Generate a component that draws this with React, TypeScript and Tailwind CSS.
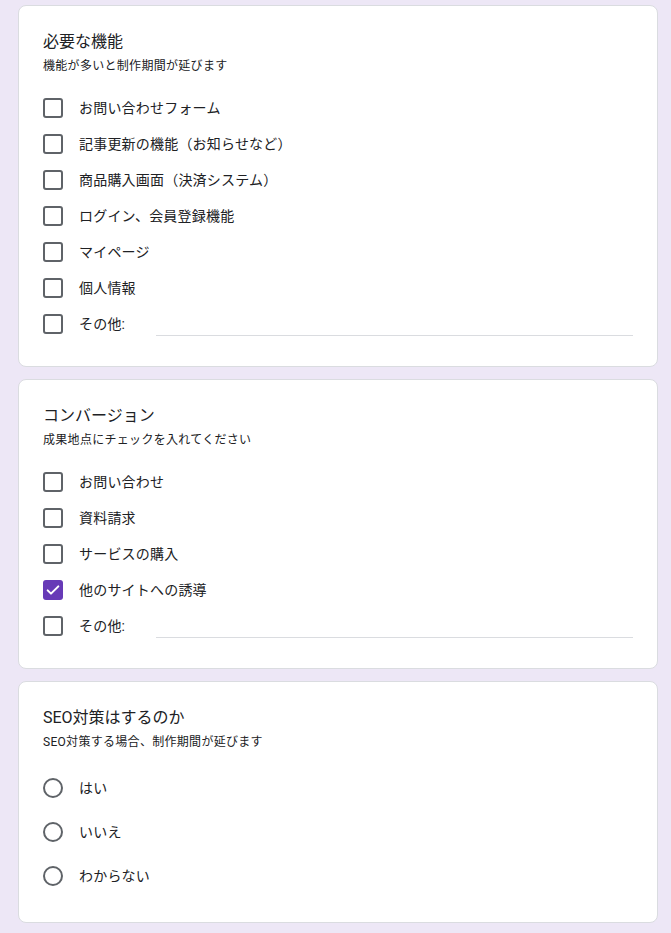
import React, { useState } from 'react';

const font = "font-['Roboto','Noto_Sans_CJK_JP',sans-serif]";

function Checkbox({ checked }: { checked: boolean }) {
  return checked ? (
    <span className="flex h-5 w-5 items-center justify-center rounded-[3px] bg-[#673ab7]">
      <svg width="16" height="16" viewBox="0 0 24 24" fill="none">
        <path d="M4 12.5l5 5 11-11" stroke="#fff" strokeWidth="3" strokeLinecap="round" strokeLinejoin="round" />
      </svg>
    </span>
  ) : (
    <span className="block h-5 w-5 rounded-[3px] border-2 border-[#5f6368]" />
  );
}

function Radio() {
  return <span className="block h-5 w-5 rounded-full border-2 border-[#5f6368]" />;
}

function CheckRow({ label, checked = false, other = false }: { label: string; checked?: boolean; other?: boolean }) {
  return (
    <div className="flex h-9 items-center">
      <div className="w-9 shrink-0">
        <Checkbox checked={checked} />
      </div>
      <span className="text-sm tracking-[0.2px] text-[#202124]">{label}</span>
      {other && <div className="ml-[31px] mt-[22px] h-px flex-1 bg-[#dadce0]" />}
    </div>
  );
}

function RadioRow({ label }: { label: string }) {
  return (
    <div className="flex h-11 items-center">
      <div className="w-9 shrink-0">
        <Radio />
      </div>
      <span className="text-sm tracking-[0.2px] text-[#202124]">{label}</span>
    </div>
  );
}

function Card({ title, desc, children }: { title: string; desc: string; children: React.ReactNode }) {
  return (
    <div className="w-[640px] rounded-lg border border-[#dadce0] bg-white px-6 pb-6 pt-6">
      <div className="text-base leading-6 text-[#202124]">{title}</div>
      <div className="mt-[2px] text-xs leading-5 tracking-[0.3px] text-[#202124]">{desc}</div>
      <div className="mt-[14px]">{children}</div>
    </div>
  );
}

export default function App() {
  const [checked] = useState(true);
  return (
    <div className={`${font} min-h-screen bg-[#ede7f6] pl-[18px] pt-[5px]`}>
      <div className="flex flex-col gap-3">
        <Card title="必要な機能" desc="機能が多いと制作期間が延びます">
          <CheckRow label="お問い合わせフォーム" />
          <CheckRow label="記事更新の機能（お知らせなど）" />
          <CheckRow label="商品購入画面（決済システム）" />
          <CheckRow label="ログイン、会員登録機能" />
          <CheckRow label="マイページ" />
          <CheckRow label="個人情報" />
          <CheckRow label="その他:" other />
        </Card>
        <Card title="コンバージョン" desc="成果地点にチェックを入れてください">
          <CheckRow label="お問い合わせ" />
          <CheckRow label="資料請求" />
          <CheckRow label="サービスの購入" />
          <CheckRow label="他のサイトへの誘導" checked={checked} />
          <CheckRow label="その他:" other />
        </Card>
        <Card title="SEO対策はするのか" desc="SEO対策する場合、制作期間が延びます">
          <RadioRow label="はい" />
          <RadioRow label="いいえ" />
          <RadioRow label="わからない" />
        </Card>
      </div>
    </div>
  );
}
